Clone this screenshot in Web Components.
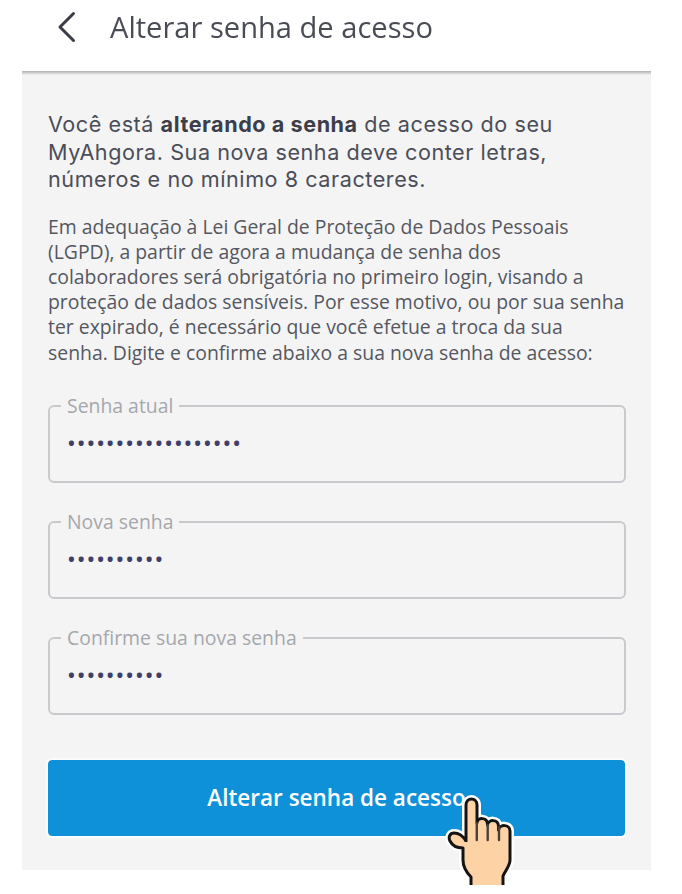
<!DOCTYPE html>
<html><head><meta charset="utf-8"><style>
html,body{margin:0;background:#fff}
body{width:682px;height:894px;overflow:hidden}
</style></head><body>
<app-screen>
<app-header slot="header">Alterar senha de acesso</app-header>
<intro-text>Você está <b>alterando a senha</b> de acesso do seu<br>MyAhgora. Sua nova senha deve conter letras,<br>números e no mínimo 8 caracteres.</intro-text>
<note-text>Em adequação à Lei Geral de Proteção de Dados Pessoais<br>(LGPD), a partir de agora a mudança de senha dos<br>colaboradores será obrigatória no primeiro login, visando a<br>proteção de dados sensíveis. Por esse motivo, ou por sua senha<br>ter expirado, é necessário que você efetue a troca da sua<br>senha. Digite e confirme abaixo a sua nova senha de acesso:</note-text>
<pw-field label="Senha atual" count="18"></pw-field>
<pw-field label="Nova senha" count="10"></pw-field>
<pw-field label="Confirme sua nova senha" count="10"></pw-field>
<action-button>Alterar senha de acesso</action-button>
</app-screen>
<script>
function def(name, html){
  customElements.define(name, class extends HTMLElement{
    constructor(){super();this.attachShadow({mode:'open'}).innerHTML=html;}
  });
}
def('app-screen',`<style>
:host{display:block;width:682px;height:894px;filter:blur(.45px)}
.panel{margin:0 31px 0 22px;height:798px;box-sizing:border-box;background:#f4f4f5;padding:39px 26px 0 26px;display:flex;flex-direction:column}
</style><slot name="header"></slot><div class="panel"><slot></slot></div>`);
def('app-header',`<style>
:host{display:block;height:72px;position:relative;z-index:1}
.bar{height:72px;display:flex;align-items:center;gap:34px;padding:0 0 18px 57px;box-sizing:border-box;margin:0 31px 0 0}
.line{position:absolute;left:22px;right:31px;top:71px;height:4px;background:linear-gradient(#aeb0b2,#d0d1d3 50%,#f0f1f2)}
svg{width:19px;height:32px;flex:none}
span{font:400 29.1px "Open Sans",sans-serif;color:#4a4c55;white-space:nowrap}
</style><div class="bar"><svg viewBox="0 0 19 32"><path d="M16.5 2.5 3 16l13.5 13.5" fill="none" stroke="#3a3c46" stroke-width="3" stroke-linecap="round" stroke-linejoin="round"/></svg><span><slot></slot></span></div><div class="line"></div>`);
def('intro-text',`<style>
:host{display:block;font:400 21.6px/27.5px Inter,sans-serif;letter-spacing:.55px;color:#4b4d57;white-space:nowrap}
::slotted(b){font-weight:700;color:#3c3e49}
</style><slot></slot>`);
def('note-text',`<style>
:host{display:block;margin-top:20px;margin-bottom:31px;font:400 19.4px/25.2px "Open Sans",sans-serif;color:#55575f;white-space:nowrap}
</style><slot></slot>`);
customElements.define('pw-field',class extends HTMLElement{
  constructor(){super();this.attachShadow({mode:'open'});}
  connectedCallback(){
    const dots='•'.repeat(+this.getAttribute('count'));
    this.shadowRoot.innerHTML=`<style>
:host{display:block;height:116.3px;box-sizing:border-box}
fieldset{margin:0;padding:0 0 0 14px;height:87px;box-sizing:border-box;border:2px solid #c9cacd;border-radius:6px;width:578px;min-width:0}
legend{padding:0 6px;font:400 19.4px/20px "Open Sans",sans-serif;color:#a5a7ab;margin-left:-3px}
.dots{font:700 18px/20px "Open Sans",sans-serif;color:#3f3f6a;letter-spacing:2.95px;margin-top:17px;margin-left:4px;white-space:nowrap}
</style><fieldset><legend></legend><div class="dots"></div></fieldset>`;
    this.shadowRoot.querySelector('legend').textContent=this.getAttribute('label');
    this.shadowRoot.querySelector('.dots').textContent=dots;
  }
});
const hand='M26 62 V25 C26 17 37 17 37 25 V43 C37.5 37 47 37 47.5 44 V45 C48.5 39 58 39 58.5 46 V50 C59.5 44 70 44 70 51 V80 C70 86 65 91 63 96 V105 H31 V97 C26 92 23 87 23 80 V68 C17 68 12 65 10 61 C8 57 10 53 14 53 C19 53 23 56 26 61';
const outline='M26 62 V25 C26 17 37 17 37 25 V43 C37.5 37 47 37 47.5 44 V45 C48.5 39 58 39 58.5 46 V50 C59.5 44 70 44 70 51 V80 C70 86 65 91 63 96 V105 M31 105 V97 C26 92 23 87 23 80 V68 C17 68 12 65 10 61 C8 57 10 53 14 53 C19 53 23 56 26 61';
def('action-button',`<style>
:host{display:block;position:relative;width:577px;height:76px;margin-top:15px}
button{display:block;width:100%;height:100%;border:0;border-radius:4px;background:#0f91d9;color:#fff;font:600 22.5px "Open Sans",sans-serif;padding:0;outline:2px solid #fbfcfd;}
svg{position:absolute;left:392px;top:20px;width:80px;height:110px;overflow:visible}
</style><button><slot></slot></button>
<svg viewBox="0 0 80 110"><path d="${hand}" fill="#fdd2a4" stroke="#fff" stroke-width="8" stroke-linejoin="round"/>
<path d="${hand}" fill="#fdd2a4"/>
<path d="${outline}" fill="none" stroke="#141414" stroke-width="3" stroke-linejoin="round"/>
<path d="M36.8 43 V60 M47.7 45 V60 M59 47 V60" fill="none" stroke="#4a4038" stroke-width="2.4" stroke-linecap="round"/></svg>`);
</script>
</body></html>
